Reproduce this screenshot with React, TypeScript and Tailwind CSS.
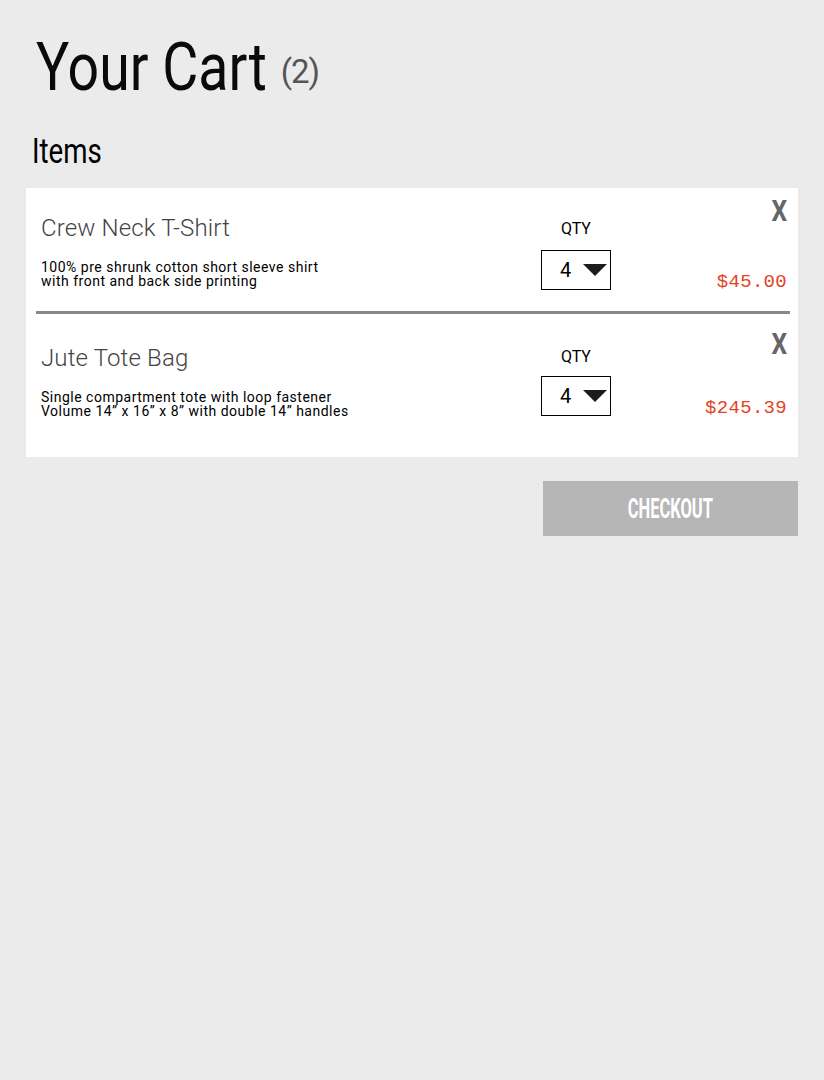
type Item = {
  name: string;
  desc: string[];
  price: string;
  namePt: string;
  qtyPt: string;
  selMt: string;
  xMt: string;
  priceMt: string;
  pb: string;
};

const items: Item[] = [
  {
    name: "Crew Neck T-Shirt",
    desc: ["100% pre shrunk cotton short sleeve shirt", "with front and back side printing"],
    price: "$45.00",
    namePt: "pt-[28px]",
    qtyPt: "pt-[33px]",
    selMt: "mt-[13px]",
    xMt: "mt-[8px]",
    priceMt: "mt-[47px]",
    pb: "pb-[23px]",
  },
  {
    name: "Jute Tote Bag",
    desc: ["Single compartment tote with loop fastener", "Volume 14\u201D x 16\u201D x 8\u201D with double 14\u201D handles"],
    price: "$245.39",
    namePt: "pt-[32px]",
    qtyPt: "pt-[35px]",
    selMt: "mt-[11px]",
    xMt: "mt-[15px]",
    priceMt: "mt-[40px]",
    pb: "pb-[39px]",
  },
];

function Row({ item }: { item: Item }) {
  return (
    <div className="flex">
      <div className={`flex-1 pl-[15px] ${item.namePt} ${item.pb}`}>
        <div className="text-[24px] leading-[24px] font-light text-[#444] tracking-[0.15px]">{item.name}</div>
        <div className="mt-[20px] text-[14px] leading-[14px] text-black tracking-[0.5px]">
          {item.desc.map((d) => (
            <div key={d}>{d}</div>
          ))}
        </div>
      </div>
      <div className={`w-[70px] flex flex-col items-center ${item.qtyPt}`}>
        <div className="text-[16px] leading-[16px] text-black">QTY</div>
        <div className={`${item.selMt} w-[70px] h-[40px] border border-black flex items-center pl-[18px]`}>
          <span className="text-[20px] leading-[20px] text-black">4</span>
          <svg className="ml-[12px]" width="24" height="12" viewBox="0 0 24 12">
            <polygon points="0,0 24,0 12,12" fill="#1c1c1c" />
          </svg>
        </div>
      </div>
      <div className="w-[187px] flex flex-col items-end pr-[11px]">
        <div className={`${item.xMt} text-[30px] leading-[30px] font-bold text-[#666] inline-block scale-x-[0.82] origin-right`}>X</div>
        <div
          className={`${item.priceMt} text-[19px] leading-[19px] text-[#e4421f] tracking-[0.3px]`}
          style={{ fontFamily: "'Liberation Mono', monospace" }}
        >
          {item.price}
        </div>
      </div>
    </div>
  );
}

export default function App() {
  return (
    <div className="min-h-[1080px] bg-[#ebebeb] pt-[36px]" style={{ fontFamily: "Roboto, 'Liberation Sans', sans-serif" }}>
      <div className="flex items-start pl-[36px]">
        <h1 className="text-[66px] leading-[64px] font-normal text-[#0a0a0a] scale-x-[0.84] origin-left">Your Cart</h1>
        <span className="-ml-[30px] mt-[19px] text-[33px] leading-[33px] text-[#555] tracking-[-1px]">(2)</span>
      </div>
      <div className="mt-[35px] pl-[32px]">
        <h2 className="text-[35px] leading-[34px] font-normal text-black scale-x-[0.79] origin-left">Items</h2>
      </div>
      <div className="mt-[19px] mx-[26px] bg-white">
        <Row item={items[0]} />
        <div className="h-[3px] bg-[#888] ml-[10px] mr-[8px]" />
        <Row item={items[1]} />
      </div>
      <div className="mt-[24px] mr-[26px] flex justify-end">
        <button className="w-[255px] h-[55px] bg-[#b6b6b6] flex items-center justify-center">
          <span className="inline-block text-[28px] leading-[28px] font-bold text-white scale-x-[0.59]">CHECKOUT</span>
        </button>
      </div>
    </div>
  );
}
